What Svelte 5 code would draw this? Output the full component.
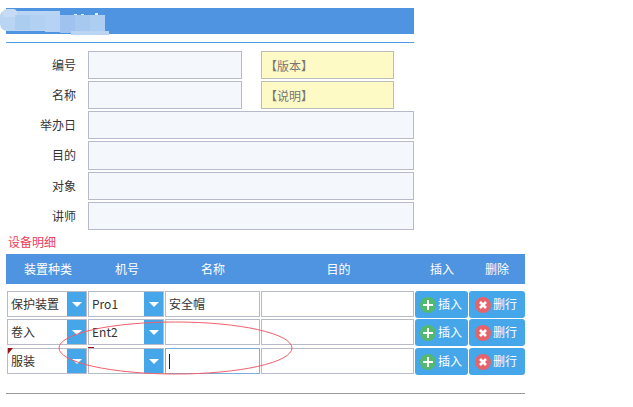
<script>
  const fields = ['举办日', '目的', '对象', '讲师'];
  const rows = [
    { kind: '保护装置', no: 'Pro1', name: '安全帽' },
    { kind: '卷入', no: 'Ent2', name: '', tall: true },
    { kind: '服装', no: '', name: '', focus: true, marks: true }
  ];
</script>

<div class="page">
  <div class="band"></div>
  <div class="rule"></div>

  <div class="form">
    <div class="frow">
      <span class="lab">编号</span><div class="inp short"></div><div class="note">【版本】</div>
    </div>
    <div class="frow">
      <span class="lab">名称</span><div class="inp short"></div><div class="note">【说明】</div>
    </div>
    {#each fields as f, i}
      <div class="frow" class:big={i === 1}>
        <span class="lab">{f}</span><div class="inp wide"></div>
      </div>
    {/each}
  </div>

  <div class="sec">设备明细</div>

  <div class="thead">
    <span>装置种类</span><span>机号</span><span>名称</span><span>目的</span><span>插入</span><span>删除</span>
  </div>

  <div class="rows">
    {#each rows as r}
      <div class="trow" class:tall={r.tall}>
        <div class="sel">
          {#if r.marks}<i class="tri"></i>{/if}
          <span class="val">{r.kind}</span><b class="arr"><i></i></b>
        </div>
        <div class="sel">
          {#if r.marks}<i class="dash"></i>{/if}
          <span class="val">{r.no}</span><b class="arr"><i></i></b>
        </div>
        <div class="cell" class:focus={r.focus}>{r.name}{#if r.focus}<i class="caret"></i>{/if}</div>
        <div class="cell"></div>
        <div class="btn ins">
          <svg width="16" height="16" viewBox="0 0 16 16"><circle cx="8" cy="8" r="8" fill="#52b96f"/><path d="M8 3v10M3 8h10" stroke="#fff" stroke-width="2"/></svg>
          <span>插入</span>
        </div>
        <div class="btn del">
          <svg width="16" height="16" viewBox="0 0 16 16"><circle cx="8" cy="8" r="8" fill="#e5636b"/><path d="M5 5l6 6M11 5l-6 6" stroke="#fff" stroke-width="2.6"/></svg>
          <span>删行</span>
        </div>
      </div>
    {/each}
  </div>

  <div class="foot"></div>

  <div class="blur">
    <i class="base"></i><i class="lump"></i><i class="b1"></i><i class="b2"></i><i class="b3"></i><i class="b4"></i><i class="b5"></i><i class="b6"></i><i class="b7"></i>
    <i class="s1"></i><i class="s2"></i><i class="s3"></i>
  </div>

  <svg class="ring" width="240" height="60" viewBox="0 0 240 60">
    <ellipse cx="117.5" cy="27" rx="116.5" ry="26" fill="none" stroke="#f0606c" stroke-width="1"/>
  </svg>
</div>

<style>
  :global(body) { margin: 0; background: #fff; }
  .page {
    position: relative;
    width: 633px;
    height: 407px;
    overflow: hidden;
    padding: 8px 0 0 6px;
    box-sizing: border-box;
    font-family: "Noto Sans CJK SC", "Noto Sans", sans-serif;
    font-size: 12px;
    color: #333;
  }
  .band { width: 408px; height: 26px; background: #4f94e0; }
  .rule { width: 408px; height: 1px; background: #4f9ae2; margin-top: 8px; }
  .form { margin-top: 8px; display: flex; flex-direction: column; gap: 2px; }
  .frow { display: flex; align-items: stretch; height: 28px; }
  .frow.big { height: 29px; }
  .lab { width: 70px; margin-right: 12px; text-align: right; line-height: 28px; color: #333; }
  .inp { box-sizing: border-box; background: #f4f7fb; border: 1px solid #b7bac8; }
  .short { width: 154px; }
  .wide { width: 326px; }
  .note {
    box-sizing: border-box;
    width: 133px;
    margin-left: 19px;
    background: #fefac6;
    border: 1px solid #bcbcc0;
    color: #777;
    line-height: 28px;
    padding-left: 3px;
  }
  .sec { color: #f0405a; line-height: 16px; margin-top: 4px; height: 16px; padding-left: 2px; }
  .thead {
    display: grid;
    grid-template-columns: 84px 74px 98px 153px 54px 56px;
    width: 519px;
    height: 30px;
    margin-top: 4px;
    background: #4f94e0;
    color: #fff;
    line-height: 30px;
    text-align: center;
  }
  .rows { margin-top: 7px; display: flex; flex-direction: column; gap: 3px; }
  .trow {
    display: grid;
    grid-template-columns: 81px 77px 96px 154px 54px 56px;
    width: 519px;
    height: 25px;
    padding-left: 1px;
    box-sizing: border-box;
  }
  .trow.tall { height: 26px; }
  .sel, .cell {
    position: relative;
    box-sizing: border-box;
    background: #fff;
    border: 1px solid #b7bac8;
    line-height: 24px;
    padding-left: 3px;
    margin-right: 1px;
  }
  .sel { display: flex; justify-content: space-between; }
  .val { white-space: nowrap; }
  .arr { width: 19px; background: #46a6ea; display: flex; align-items: center; justify-content: center; }
  .arr i { width: 0; height: 0; border: 5px solid transparent; border-top: 5px solid #fff; border-bottom: 0; }
  .focus { border-color: #7aaedc; }
  .caret { display: inline-block; width: 1px; height: 15px; background: #222; vertical-align: -3px; }
  .tri {
    position: absolute; left: 0; top: -1px; width: 0; height: 0;
    border-top: 6px solid #a10f16; border-right: 5px solid transparent;
  }
  .dash { position: absolute; left: -1px; top: -2px; width: 6px; height: 1px; background: #a10f16; }
  .btn {
    box-sizing: border-box;
    display: flex;
    align-items: center;
    gap: 2px;
    padding-left: 5px;
    background: #46a6ea;
    border-radius: 3px;
    color: #fff;
    margin-right: 1px;
    margin-bottom: -1px;
  }
  .btn svg { flex: none; }
  .btn span { padding-bottom: 2px; }
  .btn.del { margin-right: 0; padding-left: 6px; }
  .foot { width: 519px; height: 1px; background: #9a9a9e; margin-top: 20px; }

  .blur { position: absolute; left: 0; top: 0; width: 110px; height: 36px; }
  .blur i { position: absolute; display: block; }
  .base { left: 0; top: 11px; width: 60px; height: 20px; background: #b9d5f3; border-radius: 5px 0 0 7px; }
  .lump { left: 3px; top: 9px; width: 14px; height: 8px; background: #c6dcf4; border-radius: 4px 4px 0 0; }
  .b1 { left: 15px; top: 15px; width: 15px; height: 15px; background: #abcdf0; }
  .b2 { left: 30px; top: 15px; width: 15px; height: 15px; background: #b2d1f2; }
  .b3 { left: 45px; top: 13px; width: 15px; height: 19px; background: #b6d2f4; }
  .b4 { left: 60px; top: 15px; width: 15px; height: 18px; background: #9fc3ee; }
  .b5 { left: 75px; top: 15px; width: 15px; height: 16px; background: #a7c8ef; }
  .b6 { left: 90px; top: 15px; width: 15px; height: 16px; background: #adcdf1; }
  .b7 { left: 71px; top: 31px; width: 38px; height: 4px; background: #bad5f4; }
  .s1 { left: 74px; top: 14px; width: 3px; height: 1px; background: #e3eefa; }
  .s2 { left: 81px; top: 14px; width: 3px; height: 1px; background: #e3eefa; }
  .s3 { left: 95px; top: 13px; width: 3px; height: 2px; background: #e3eefa; }

  .ring { position: absolute; left: 58px; top: 321px; pointer-events: none; }
</style>
